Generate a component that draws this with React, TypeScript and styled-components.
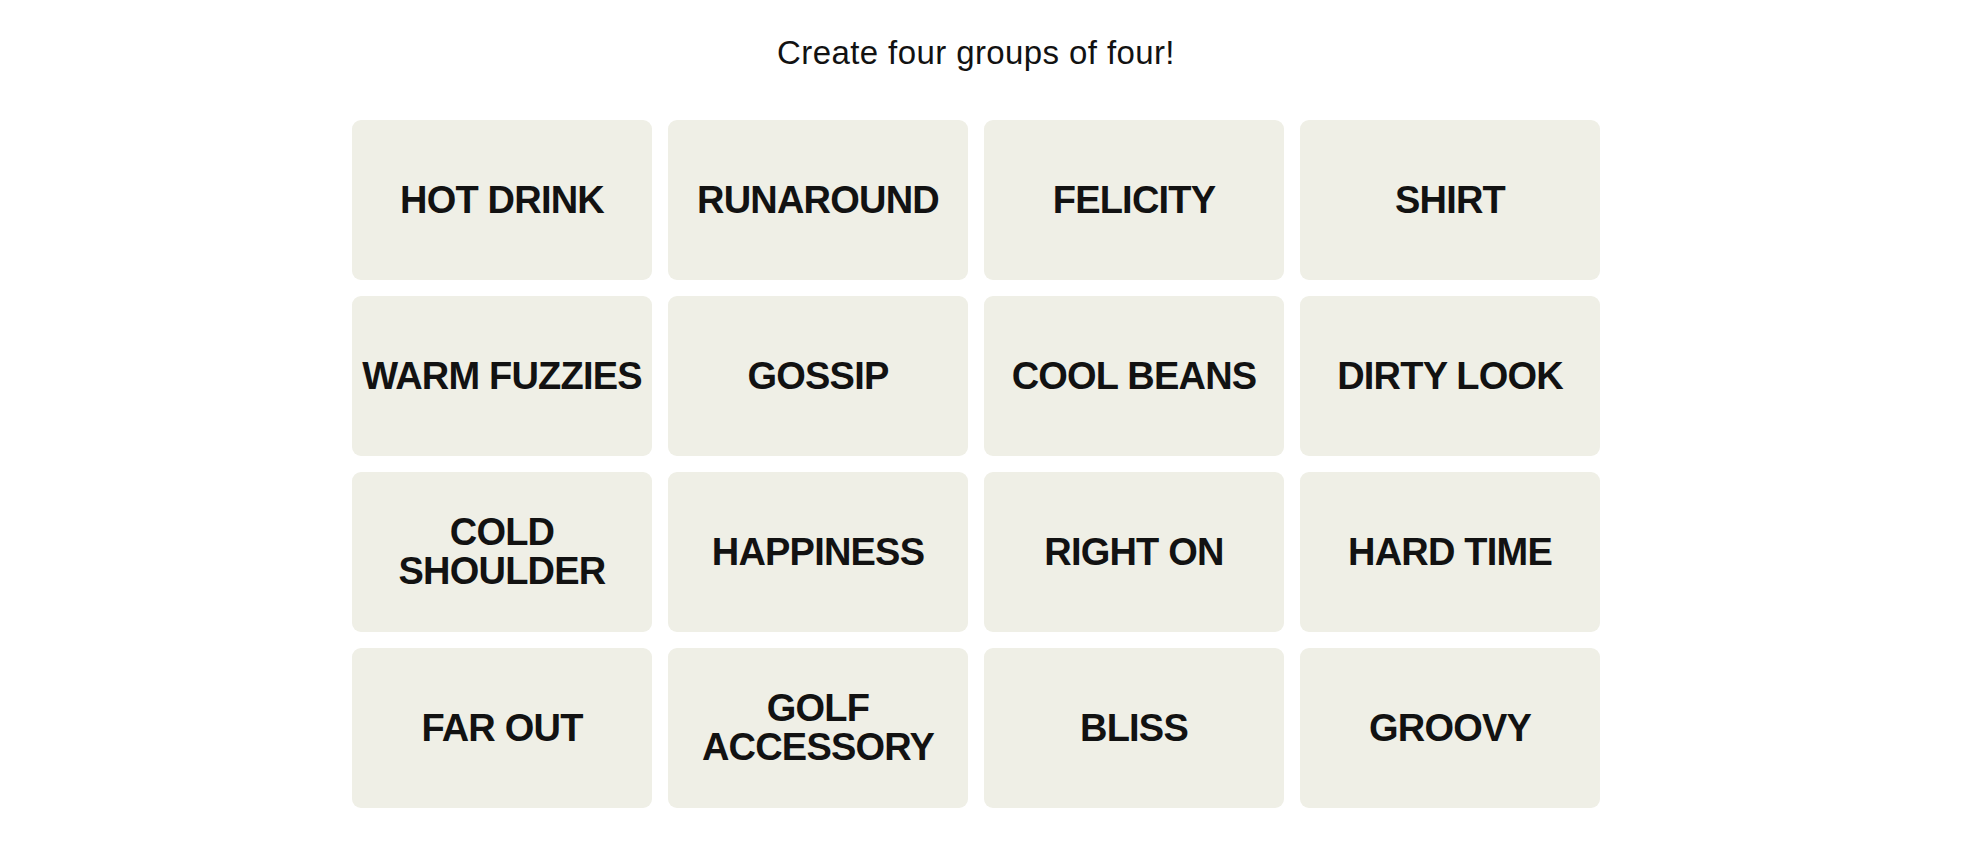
import { createGlobalStyle, styled } from "styled-components";

const GlobalStyle = createGlobalStyle`
  html, body {
    margin: 0;
    padding: 0;
    background: #ffffff;
  }
  body {
    font-family: "Liberation Sans", Arial, sans-serif;
    color: #121212;
  }
`;

const Page = styled.main`
  display: flex;
  flex-direction: column;
  align-items: center;
  padding: 33px 12px 0 0;
`;

const Prompt = styled.p`
  margin: 0 0 47px;
  font-size: 33px;
  line-height: 40px;
  letter-spacing: 0.4px;
  font-weight: 400;
  color: #121212;
`;

const Board = styled.div`
  display: grid;
  grid-template-columns: repeat(4, 300px);
  grid-auto-rows: 160px;
  gap: 16px;
`;

const Tile = styled.button`
  display: flex;
  align-items: center;
  justify-content: center;
  padding: 0 8px;
  border: none;
  border-radius: 9px;
  background: #efefe6;
  color: #121212;
  font-family: "Liberation Sans", Arial, sans-serif;
  font-size: 38px;
  font-weight: 700;
  line-height: 39px;
  letter-spacing: -0.8px;
  text-transform: uppercase;
  text-align: center;
  cursor: pointer;
`;

const words = [
  "HOT DRINK",
  "RUNAROUND",
  "FELICITY",
  "SHIRT",
  "WARM FUZZIES",
  "GOSSIP",
  "COOL BEANS",
  "DIRTY LOOK",
  "COLD SHOULDER",
  "HAPPINESS",
  "RIGHT ON",
  "HARD TIME",
  "FAR OUT",
  "GOLF ACCESSORY",
  "BLISS",
  "GROOVY",
];

// two-word labels that wrap in the original board
const split = new Set(["COLD SHOULDER", "GOLF ACCESSORY"]);

export default function App() {
  return (
    <>
      <GlobalStyle />
      <Page>
        <Prompt>Create four groups of four!</Prompt>
        <Board>
          {words.map((word) => (
            <Tile key={word}>
              {split.has(word) ? (
                <span>
                  {word.split(" ")[0]}
                  <br />
                  {word.split(" ")[1]}
                </span>
              ) : (
                word
              )}
            </Tile>
          ))}
        </Board>
      </Page>
    </>
  );
}
